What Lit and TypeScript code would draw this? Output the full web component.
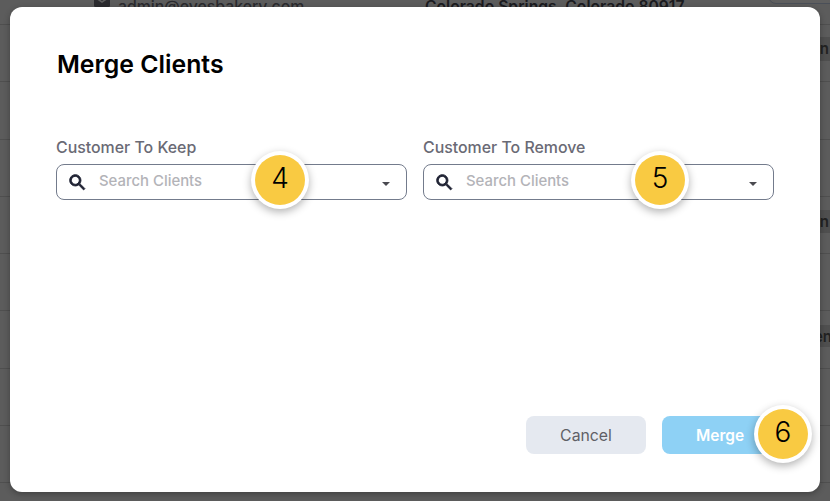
import { LitElement, html, css } from "lit";
import { customElement } from "lit/decorators.js";

const searchIcon = html`<svg class="search" viewBox="0 0 24 24" aria-hidden="true"><path fill="#1f2233" stroke="#1f2233" stroke-width="1" d="M15.500 14h-.79l-.28-.27C15.410 12.590 16 11.110 16 9.500 16 5.910 13.090 3 9.500 3S3 5.910 3 9.500 5.910 16 9.500 16c1.610 0 3.090-.59 4.230-1.570l.27.28v.79l5 4.990L20.490 19l-4.990-5zm-6 0C7.010 14 5 11.990 5 9.500S7.010 5 9.500 5 14 7.010 14 9.500 11.990 14 9.500 14z"/></svg>`;

@customElement("app-root")
export class AppRoot extends LitElement {
  static styles = css`
    :host { display: block; position: relative; width: 830px; height: 501px; overflow: hidden; background: #5c5c5c; font-family: Inter, "Liberation Sans", sans-serif; }
    .page { display: flex; flex-direction: column; height: 100%; color: #1b1b1f; }
    .top { height: 25px; flex: none; display: flex; border-bottom: 1px solid #4f4f4f; box-sizing: border-box; font-size: 15.800px; font-weight: 500; line-height: 14px; align-items: flex-start; }
    .mail { display: flex; align-items: flex-start; gap: 8px; margin: 0 0 0 94px; width: 331px; color: #2a2a2e; }
    .mail svg { width: 16px; height: 13px; flex: none; margin-top: -6px; }
    .city { font-weight: 600; font-size: 15.700px; }
    .row { height: 57.300px; flex: none; box-sizing: border-box; border-bottom: 1px solid #4f4f4f; }
    .pill { position: absolute; left: 768px; top: -20px; width: 90px; height: 24px; box-sizing: border-box; border: 1px solid #4a4f58; border-radius: 8px; background: #5f5f5f; }
    .modal { position: absolute; left: 10px; top: 7px; width: 810px; height: 485px; box-sizing: border-box; padding: 42px 42px 38px 46px; background: #fff; border-radius: 12px; box-shadow: 0 2px 6px rgba(0,0,0,.3); display: flex; flex-direction: column; }
    h1 { margin: 0 0 0 1px; font-size: 24.800px; line-height: 30px; font-weight: 600; color: #000; }
    .fields { display: flex; gap: 16px; margin-top: 60px; }
    .field { width: 351px; display: flex; flex-direction: column; gap: 7px; }
    label { font-size: 15.900px; line-height: 18px; font-weight: 500; color: #6a6a75; }
    .select { height: 36px; box-sizing: border-box; border: 1px solid #737b8c; border-radius: 8px; display: flex; align-items: center; padding: 0 16px 0 10px; }
    .search { width: 21px; height: 21px; flex: none; }
    .ph { flex: 1; margin-left: 11px; padding-bottom: 2px; font-size: 14.900px; font-weight: 500; color: #b3b3b8; }
    .caret { width: 0; height: 0; border-left: 4.500px solid transparent; border-right: 4.500px solid transparent; border-top: 4.500px solid #4a4a50; margin-top: 3px; }
    .actions { margin-top: auto; display: flex; justify-content: flex-end; gap: 16px; }
    button { height: 38px; border: 0; border-radius: 8px; font: 400 15.800px Inter, sans-serif; }
    .cancel { width: 120px; background: #e5e9f0; color: #5f6066; }
    .merge { width: 116px; background: #8ed1f5; color: #fff; font-weight: 600; font-size: 15.500px; }
    .badge { position: absolute; width: 50px; height: 50px; box-sizing: border-box; padding-bottom: 4px; border-radius: 50%; background: #f9ca42; box-shadow: 0 0 0 4px #fff, 0 3px 8px 4px rgba(0,0,0,.3); display: flex; align-items: center; justify-content: center; font: 300 28px Inter, sans-serif; color: #000; transform: translate(-50%, -50%); }
    .b4 { left: 280px; top: 180px; }
    .b5 { left: 660px; top: 180px; }
    .b6 { left: 783px; top: 434px; }
    .tag { position: absolute; width: 24px; background: #4f4f4f; color: #222; font-weight: 600; font-size: 15px; line-height: 24px; overflow: hidden; }
    .t1 { left: 811px; top: 37px; height: 24px; }
    .t2 { left: 811px; top: 210px; height: 23px; }
    .t3 { left: 814px; top: 325px; height: 22px; }
  `;

  render() {
    return html`
      <div class="page">
        <div class="top">
          <div class="mail">
            <svg viewBox="0 0 16 13"><path fill="#2a2a2e" d="M0 1.500A1.500 1.500 0 0 1 1.500 0h13A1.500 1.500 0 0 1 16 1.500L8 7 0 1.500zM0 3.500V11.500A1.500 1.500 0 0 0 1.500 13h13a1.500 1.500 0 0 0 1.500-1.500V3.500L8 9 0 3.500z"/></svg>
            <span>admin@evesbakery.com</span>
          </div>
          <div class="city">Colorado Springs, Colorado 80917</div>
        </div>
        ${Array.from({ length: 8 }, () => html`<div class="row"></div>`)}
      </div>
      <div class="pill"></div>
      <div class="tag t1">en</div>
      <div class="tag t2">en</div>
      <div class="tag t3">en</div>
      <div class="modal">
        <h1>Merge Clients</h1>
        <div class="fields">
          <div class="field">
            <label>Customer To Keep</label>
            <div class="select">${searchIcon}<span class="ph">Search Clients</span><span class="caret"></span></div>
          </div>
          <div class="field">
            <label>Customer To Remove</label>
            <div class="select">${searchIcon}<span class="ph">Search Clients</span><span class="caret"></span></div>
          </div>
        </div>
        <div class="actions">
          <button class="cancel">Cancel</button>
          <button class="merge">Merge</button>
        </div>
      </div>
      <div class="badge b4">4</div>
      <div class="badge b5">5</div>
      <div class="badge b6">6</div>
    `;
  }
}
